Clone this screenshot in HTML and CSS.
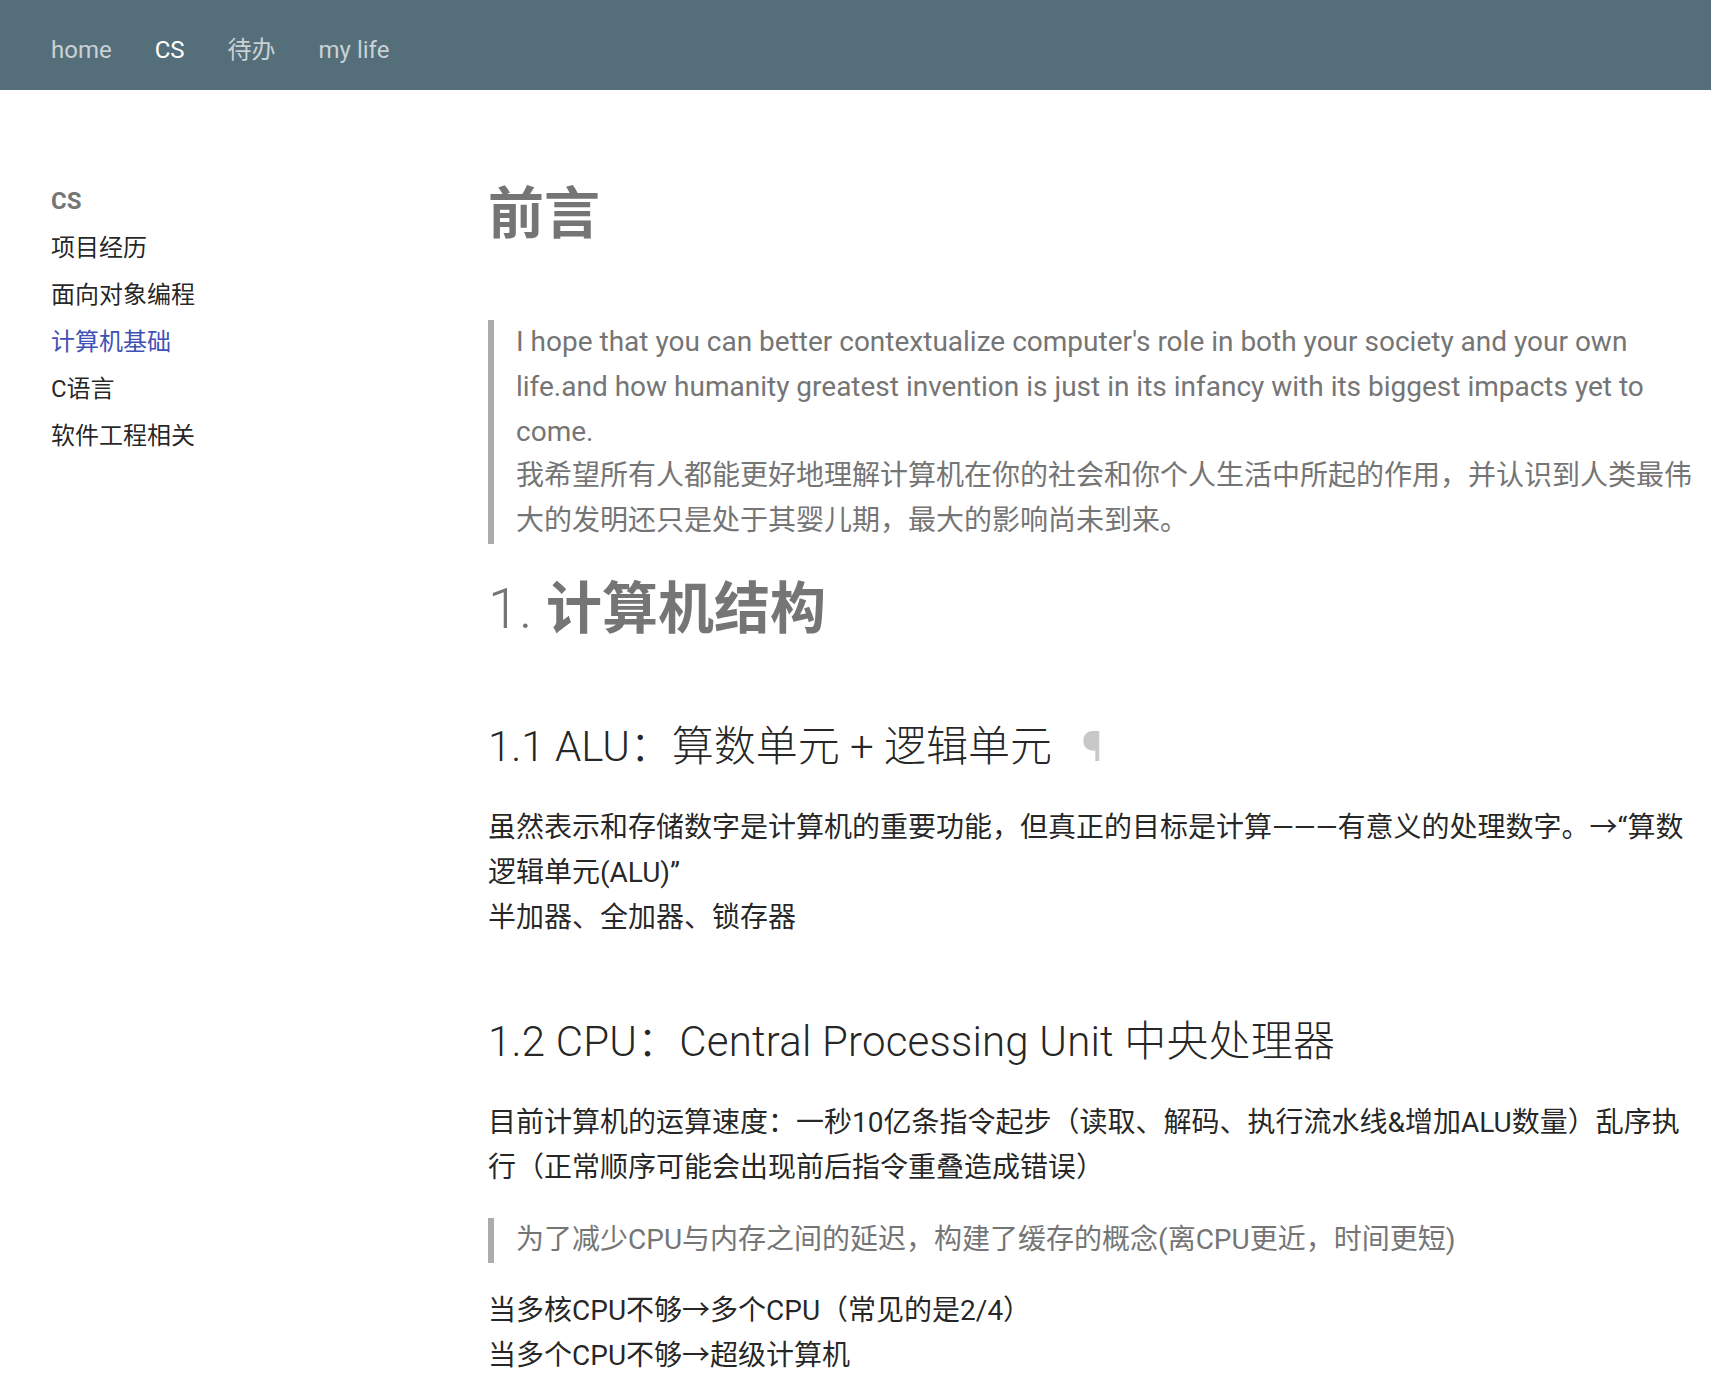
FILE: index.html
```html
<!DOCTYPE html>
<html lang="zh">
<head>
<meta charset="utf-8">
<title>计算机基础</title>
<link rel="stylesheet" href="styles.css">
</head>
<body>
<header class="topbar">
  <nav class="topnav">
    <a class="topnav-item" href="#">home</a>
    <a class="topnav-item active" href="#">CS</a>
    <a class="topnav-item" href="#">待办</a>
    <a class="topnav-item" href="#">my life</a>
  </nav>
</header>
<div class="layout">
  <aside class="sidebar">
    <div class="sidebar-title">CS</div>
    <a class="sidebar-link" href="#">项目经历</a>
    <a class="sidebar-link" href="#">面向对象编程</a>
    <a class="sidebar-link active" href="#">计算机基础</a>
    <a class="sidebar-link" href="#">C语言</a>
    <a class="sidebar-link" href="#">软件工程相关</a>
  </aside>
  <main class="content">
    <h1 class="title">前言</h1>
    <blockquote class="quote">
      <p>I hope that you can better contextualize computer's role in both your society and your own life.and how humanity greatest invention is just in its infancy with its biggest impacts yet to come.<br>我希望所有人都能更好地理解计算机在你的社会和你个人生活中所起的作用，并认识到人类最伟大的发明还只是处于其婴儿期，最大的影响尚未到来。</p>
    </blockquote>
    <h2 class="section"><span class="num">1. </span>计算机结构</h2>
    <h3 class="sub">1.1 ALU：算数单元 + 逻辑单元<span class="anchor">¶</span></h3>
    <p class="text">虽然表示和存储数字是计算机的重要功能，但真正的目标是计算———有意义的处理数字。→“算数逻辑单元(ALU)”<br>半加器、全加器、锁存器</p>
    <h3 class="sub sub-second">1.2 CPU：Central Processing Unit 中央处理器</h3>
    <p class="text">目前计算机的运算速度：一秒10亿条指令起步（读取、解码、执行流水线&amp;增加ALU数量）乱序执行（正常顺序可能会出现前后指令重叠造成错误）</p>
    <blockquote class="quote quote-small">
      <p>为了减少CPU与内存之间的延迟，构建了缓存的概念(离CPU更近，时间更短)</p>
    </blockquote>
    <p class="text text-last">当多核CPU不够→多个CPU（常见的是2/4）<br>当多个CPU不够→超级计算机</p>
  </main>
</div>
</body>
</html>
```
FILE: styles.css
```css
html, body {
  margin: 0;
  padding: 0;
  background: #ffffff;
}
body {
  font-family: Roboto, "Noto Sans CJK SC", sans-serif;
  color: rgba(0, 0, 0, 0.87);
  overflow: hidden;
}
a {
  text-decoration: none;
}
.topbar {
  height: 90px;
  box-sizing: border-box;
  background: #546e7a;
  display: flex;
  align-items: center;
  padding-left: 51px;
  padding-top: 9px;
}
.topnav {
  display: flex;
  gap: 43px;
}
.topnav-item {
  font-size: 24px;
  color: rgba(255, 255, 255, 0.7);
  line-height: 30px;
}
.topnav-item.active {
  color: #ffffff;
}
.layout {
  display: flex;
}
.sidebar {
  width: 488px;
  flex: none;
  padding-left: 51px;
  padding-top: 88px;
  box-sizing: border-box;
  display: flex;
  flex-direction: column;
}
.sidebar-title {
  font-size: 24px;
  line-height: 47px;
  font-weight: 700;
  color: #757575;
}
.sidebar-link {
  font-size: 24px;
  line-height: 47px;
  color: rgba(0, 0, 0, 0.87);
}
.sidebar-link.active {
  color: #3f51b5;
}
.content {
  width: 1215px;
  flex: none;
  padding-top: 88px;
  font-size: 28px;
  line-height: 1.6;
}
.title {
  margin: 0 0 70px;
  font-size: 56px;
  line-height: 72px;
  font-weight: 700;
  color: #757575;
}
.quote {
  margin: 0;
  border-left: 6px solid #acacac;
  padding-left: 22px;
  color: #757575;
}
.quote p {
  margin: 0;
}
.section {
  margin: 29px 0 0;
  font-size: 56px;
  line-height: 72px;
  font-weight: 700;
  color: #757575;
}
.num {
  font-weight: 300;
}
.sub {
  margin: 75px 0 0;
  font-size: 42px;
  line-height: 54px;
  font-weight: 300;
  color: rgba(0, 0, 0, 0.87);
}
.sub-second {
  margin-top: 75px;
  letter-spacing: 0.2px;
}
.anchor {
  margin-left: 30px;
  color: #c8c8c8;
  font-weight: 400;
}
.text {
  margin: 32px 0 0;
}
.quote-small {
  margin-top: 27px;
}
.text-last {
  margin-top: 26px;
}
```
